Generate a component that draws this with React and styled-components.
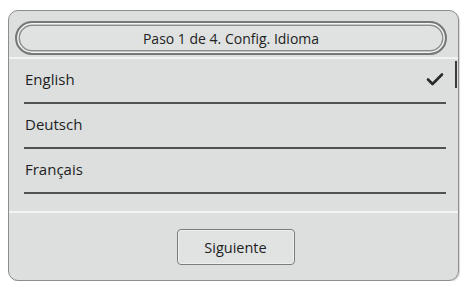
import React from 'react';
import styled, { createGlobalStyle } from 'styled-components';

const GlobalStyle = createGlobalStyle`
    html, body {
        margin: 0;
        padding: 0;
        background: #ffffff;
        font-family: "Open Sans", "Noto Sans", sans-serif;
    }
`;

const Panel = styled.div`
    box-sizing: border-box;
    width: 451px;
    height: 271px;
    margin: 10px 0 0 8px;
    display: flex;
    flex-direction: column;
    background: #dcdfde;
    border: 1.5px solid #8c8e8d;
    border-radius: 10px;
    box-shadow: 1px 1px 1px rgba(0, 0, 0, 0.15);
    overflow: hidden;
`;

const HeaderArea = styled.div`
    padding: 10px 11px 2px 6px;
    border-bottom: 2px solid #f1f3f2;
`;

const Pill = styled.div`
    box-sizing: border-box;
    height: 34px;
    display: flex;
    align-items: center;
    justify-content: center;
    border: 2px solid #767877;
    border-radius: 17px;
    box-shadow: inset 0 0 0 1.5px #f4f5f5, inset 0 0 0 3px #8d8f8e;
    background: #dfe2e1;
    color: #222;
    font-size: 14px;
`;

const ListArea = styled.div`
    position: relative;
    flex: 1;
    padding: 0 12px 0 15px;
    border-bottom: 2px solid #f3f5f4;
`;

const Row = styled.div`
    box-sizing: border-box;
    height: 45px;
    display: flex;
    align-items: center;
    justify-content: space-between;
    border-bottom: 2px solid #505251;
    padding: 0 2px 3px 1px;
    color: #1e1e1e;
    font-size: 15px;
`;

const Scrollbar = styled.div`
    position: absolute;
    top: 2px;
    right: 1px;
    width: 2px;
    height: 27px;
    background: #3a3c3b;
`;

const Footer = styled.div`
    height: 67px;
    display: flex;
    align-items: center;
    justify-content: center;
`;

const NextButton = styled.button`
    box-sizing: border-box;
    width: 118px;
    height: 36px;
    margin: 1px 0 0 4px;
    background: #e0e3e2;
    border: 1.5px solid #7b7d7c;
    border-radius: 4px;
    box-shadow: inset 0 0 0 1px #eef0ef;
    font-family: "Open Sans", "Noto Sans", sans-serif;
    font-size: 14.5px;
    color: #1e1e1e;
`;

const Check = () => (
    <svg width="18" height="14" viewBox="0 0 18 14">
        <path d="M2 7.5 L6.5 12 L16 2.5" fill="none" stroke="#2a2a2a" strokeWidth="2.6" strokeLinecap="round" strokeLinejoin="round" />
    </svg>
);

const languages = [
    { name: 'English', selected: true },
    { name: 'Deutsch' },
    { name: 'Français' },
];

export default function App() {
    return (
        <>
            <GlobalStyle />
            <Panel>
                <HeaderArea>
                    <Pill>Paso 1 de 4. Config. Idioma</Pill>
                </HeaderArea>
                <ListArea>
                    {languages.map((lang) => (
                        <Row key={lang.name}>
                            <span>{lang.name}</span>
                            {lang.selected && <Check />}
                        </Row>
                    ))}
                    <Scrollbar />
                </ListArea>
                <Footer>
                    <NextButton>Siguiente</NextButton>
                </Footer>
            </Panel>
        </>
    );
}
